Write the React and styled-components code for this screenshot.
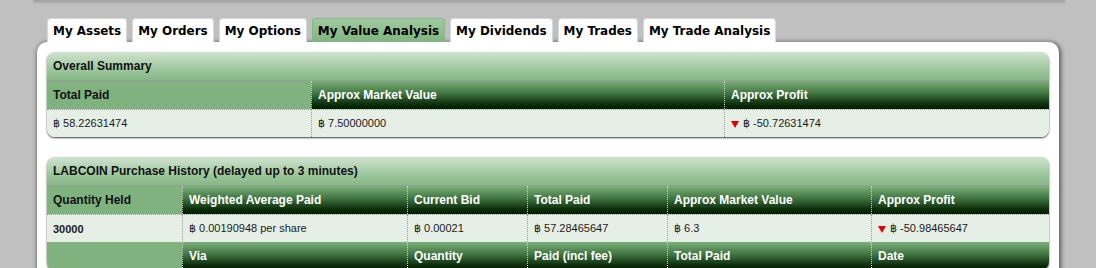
import React from 'react';
import styled, { createGlobalStyle } from 'styled-components';

const GlobalStyle = createGlobalStyle`
  html, body {
    margin: 0;
    padding: 0;
    background: #bfbfbf;
  }
  body {
    font-family: "Liberation Sans", Arial, sans-serif;
  }
`;

const Page = styled.div`
  width: 1096px;
  height: 268px;
  overflow: hidden;
  background: #c0c0c0;
`;

const TopShade = styled.div`
  margin-left: 33px;
  width: 1032px;
  height: 4px;
  background: linear-gradient(#a2a2a2, #a8a8a8 50%, #bdbdbd);
`;

const Tabs = styled.div`
  display: flex;
  gap: 5px;
  margin: 14px 0 0 47px;
  height: 24px;
`;

const Tab = styled.div`
  box-sizing: border-box;
  height: 24px;
  padding: 0 5px;
  border: 1px solid ${p => (p.active ? '#8ab78a' : '#d8d8d8')};
  border-bottom: none;
  border-radius: 4px 4px 0 0;
  background: ${p => (p.active ? 'linear-gradient(#9fcb9f, #80b480)' : '#ffffff')};
  font-family: "DejaVu Sans", Verdana, sans-serif;
  font-weight: bold;
  font-size: 11.95px;
  line-height: 24px;
  color: #000;
  white-space: nowrap;
`;

const Panel = styled.div`
  margin-left: 37px;
  width: 1022px;
  min-height: 260px;
  box-sizing: border-box;
  padding: 10px;
  background: #fff;
  border-radius: 10px 10px 0 0;
  box-shadow: 1px 1px 4px 1px rgba(0, 0, 0, 0.55);
  display: flex;
  flex-direction: column;
  gap: 20px;
`;

const Section = styled.div`
  border-radius: 8px;
  overflow: hidden;
  box-shadow: 0 1px 2px rgba(0, 0, 0, 0.75);
  background: #e6efe6;
`;

const Title = styled.div`
  height: 28px;
  line-height: 28px;
  padding: 0 6px;
  font-size: 12px;
  font-weight: bold;
  color: #111;
  background: linear-gradient(#d0e3d0, #9fc89f 60%, #86b886);
  border-bottom: 1px solid #9a9a9a;
`;

const Row = styled.div`
  display: grid;
  grid-template-columns: ${p => p.cols};
`;

const Head = styled.div`
  height: 28px;
  line-height: 28px;
  padding: 0 6px;
  font-size: 12px;
  font-weight: bold;
  white-space: nowrap;
  color: ${p => (p.flat ? '#111' : '#fff')};
  background: ${p =>
    p.flat ? '#80b280' : 'linear-gradient(#7bb07b, #3f733f 45%, #0a2a0a 85%, #002000)'};
  & + & {
    border-left: 1px dotted #c8d8c8;
  }
`;

const Cell = styled.div`
  height: 28px;
  display: flex;
  align-items: center;
  gap: 4px;
  padding: 0 6px;
  font-size: 11px;
  font-weight: ${p => (p.bold ? 'bold' : 'normal')};
  color: #1a1a1a;
  background: #e6efe6;
  border-top: 1px dotted #9a9a9a;
  box-sizing: border-box;
  white-space: nowrap;
  & + & {
    border-left: 1px dotted #9a9a9a;
  }
`;

const Down = () => (
  <svg width="8" height="8" viewBox="0 0 8 8">
    <polygon points="0,1 8,1 4,8" fill="#e00000" />
  </svg>
);

const summaryCols = '264px 413px 325px';
const historyCols = '135px 225px 120px 140px 204px 178px';

const tabs = [
  'My Assets',
  'My Orders',
  'My Options',
  'My Value Analysis',
  'My Dividends',
  'My Trades',
  'My Trade Analysis'
];

export default function App() {
  return (
    <Page>
      <GlobalStyle />
      <TopShade />
      <Tabs>
        {tabs.map(t => (
          <Tab key={t} active={t === 'My Value Analysis'}>{t}</Tab>
        ))}
      </Tabs>
      <Panel>
        <Section>
          <Title>Overall Summary</Title>
          <Row cols={summaryCols}>
            <Head flat>Total Paid</Head>
            <Head>Approx Market Value</Head>
            <Head>Approx Profit</Head>
          </Row>
          <Row cols={summaryCols}>
            <Cell>฿ 58.22631474</Cell>
            <Cell>฿ 7.50000000</Cell>
            <Cell><Down />฿ -50.72631474</Cell>
          </Row>
        </Section>
        <Section>
          <Title>LABCOIN Purchase History (delayed up to 3 minutes)</Title>
          <Row cols={historyCols}>
            <Head flat>Quantity Held</Head>
            <Head>Weighted Average Paid</Head>
            <Head>Current Bid</Head>
            <Head>Total Paid</Head>
            <Head>Approx Market Value</Head>
            <Head>Approx Profit</Head>
          </Row>
          <Row cols={historyCols}>
            <Cell bold>30000</Cell>
            <Cell>฿ 0.00190948 per share</Cell>
            <Cell>฿ 0.00021</Cell>
            <Cell>฿ 57.28465647</Cell>
            <Cell>฿ 6.3</Cell>
            <Cell><Down />฿ -50.98465647</Cell>
          </Row>
          <Row cols={historyCols}>
            <Head flat></Head>
            <Head>Via</Head>
            <Head>Quantity</Head>
            <Head>Paid (incl fee)</Head>
            <Head>Total Paid</Head>
            <Head>Date</Head>
          </Row>
        </Section>
      </Panel>
    </Page>
  );
}
